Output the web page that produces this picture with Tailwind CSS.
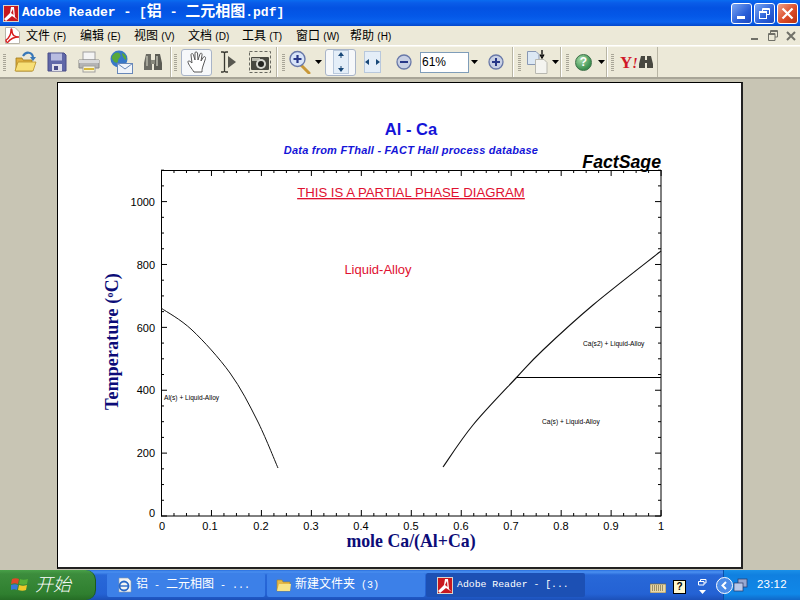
<!DOCTYPE html>
<html lang="zh-CN">
  <head>
    <meta charset="UTF-8" />
    <title>Adobe Reader - [铝 - 二元相图.pdf]</title>
    <script src="https://cdn.jsdelivr.net/npm/@tailwindcss/browser@4"></script>
  </head>
  <body class="w-[800px] h-[600px] overflow-hidden bg-[#ece9d8] font-['Liberation_Sans','Noto_Sans_CJK_SC',sans-serif]">
    <div class="flex flex-col h-[600px]">
      <!-- title bar -->
      <div class="h-[26px] shrink-0 flex items-center pl-[3px] pr-[2px] bg-[linear-gradient(180deg,#0a6cf0_0px,#0a5ce8_3px,#0352e2_8px,#0458e8_16px,#0a62ee_22px,#0348cc_26px)]">
        <svg class="w-[16px] h-[17px]" viewBox="0 0 16 17">
          <rect width="16" height="17" fill="#d8d4cc"/>
          <rect x="1" y="1" width="14" height="15" fill="#c8181e"/>
          <path d="M1 14 L7 8 L8 2 L11 2 L12 12 L15 15 L9 11 L3 16 Z" fill="#fff"/>
          <path d="M8 8 L10 4 L10.5 10 Z" fill="#c8181e"/>
        </svg>
        <div class="ml-[3px] text-white font-bold text-[13px] whitespace-pre font-['Liberation_Mono','Noto_Sans_CJK_SC',monospace]">Adobe Reader - [<span class="text-[15px]">铝</span> - <span class="text-[15px]">二元相图</span>.pdf]</div>
        <div class="ml-auto flex gap-[2px]">
          <div class="w-[21px] h-[21px] rounded-[3px] border border-white bg-[linear-gradient(135deg,#7ba6f2,#2a5fd8_60%,#1c48c0)] flex items-end pl-[5px] pb-[4px]">
            <div class="w-[8px] h-[3px] bg-white"></div>
          </div>
          <div class="w-[21px] h-[21px] rounded-[3px] border border-white bg-[linear-gradient(135deg,#7ba6f2,#2a5fd8_60%,#1c48c0)] relative">
            <svg class="w-[19px] h-[19px]" viewBox="0 0 19 19" fill="none" stroke="#fff"><path d="M7.5 7V4.5H14.5V10.5H12"/><rect x="4.5" y="7.5" width="7" height="7"/><path d="M7.5 5.5H14.5M4.5 8.5H11.5"/></svg>
          </div>
          <div class="w-[21px] h-[21px] rounded-[3px] border border-white bg-[linear-gradient(135deg,#f0a088,#dc4c28_55%,#b83010)]">
            <svg class="w-[19px] h-[19px]" viewBox="0 0 19 19" fill="none" stroke="#fff" stroke-width="2.2"><path d="M4.5 4.5L14.5 14.5M14.5 4.5L4.5 14.5"/></svg>
          </div>
        </div>
      </div>

      <!-- menu bar -->
      <div class="h-[20px] shrink-0 flex items-center text-[12px] text-black border-b border-white relative">
        <svg class="ml-[5px] w-[15px] h-[17px]" viewBox="0 0 15 17">
          <path d="M.5.5H10L14.5 5V16.5H.5Z" fill="#fff" stroke="#b8b4a8"/>
          <path d="M1 13C4 11 6 7 6 3C6 1 7 2 7 4C7 8 10 10 14 10C10 10 6 11 3 15C2 16 1 15 1 13Z" fill="none" stroke="#d81e1e" stroke-width="1.4"/>
        </svg>
        <div class="ml-[6px] w-[54px] whitespace-pre">文件 <span class="text-[10px]">(F)</span></div>
        <div class="w-[54px] whitespace-pre">编辑 <span class="text-[10px]">(E)</span></div>
        <div class="w-[54px] whitespace-pre">视图 <span class="text-[10px]">(V)</span></div>
        <div class="w-[54px] whitespace-pre">文档 <span class="text-[10px]">(D)</span></div>
        <div class="w-[54px] whitespace-pre">工具 <span class="text-[10px]">(T)</span></div>
        <div class="w-[54px] whitespace-pre">窗口 <span class="text-[10px]">(W)</span></div>
        <div class="w-[54px] whitespace-pre">帮助 <span class="text-[10px]">(H)</span></div>
        <div class="ml-auto flex pr-[1px]">
          <svg class="w-[16px] h-[16px] mr-[2px]" viewBox="0 0 16 16"><rect x="4" y="10" width="7" height="2" fill="#707068"/></svg>
          <svg class="w-[16px] h-[16px] mr-[2px]" viewBox="0 0 16 16" fill="none" stroke="#707068"><path d="M5.5 5V2.5H12.5V9H10M3.5 5.5H10V12.5H3.5ZM3.5 6.5H10M5.5 3.5H12.5"/></svg>
          <svg class="w-[16px] h-[16px]" viewBox="0 0 16 16" fill="none" stroke="#707068" stroke-width="2"><path d="M4 4L12 12M12 4L4 12"/></svg>
        </div>
      </div>

      <!-- toolbar -->
      <div class="h-[33px] shrink-0 flex border-b-[2px] border-[#a8a597] border-t border-t-[#f8f6ec]">
        <div class="w-[171px] shrink-0 flex items-center relative border-r border-r-[#b8b5a4] pl-[9px]">
          <div class="absolute left-[3px] top-[7px] w-[3px] h-[17px] bg-[repeating-linear-gradient(180deg,#a8a597_0,#a8a597_1px,transparent_1px,transparent_2px)]"></div>
          <div class="w-[32px] flex justify-center">
            <svg class="w-[24px] h-[24px]" viewBox="0 0 24 24">
              <path d="M3 8H9L10 10H19V21H3Z" fill="#e0b040" stroke="#a07818" stroke-width=".8"/>
              <path d="M2 21L5 12H23L20 21Z" fill="#f8e078" stroke="#b89028" stroke-width=".8"/>
              <path d="M10 6C13 1 19 2 20 7" fill="none" stroke="#3878b8" stroke-width="2.2"/>
              <path d="M17 7H23L20 11Z" fill="#3878b8"/>
            </svg>
          </div>
          <div class="w-[32px] flex justify-center">
            <svg class="w-[20px] h-[20px]" viewBox="0 0 20 20">
              <path d="M1 1H17L19 3V19H1Z" fill="#6068a8" stroke="#484c88"/>
              <rect x="4" y="1.5" width="11" height="7" fill="#b8bce0"/>
              <rect x="5" y="12" width="10" height="7" fill="#e0e0ec"/>
              <rect x="7" y="14" width="4" height="4" fill="#484c88"/>
            </svg>
          </div>
          <div class="w-[32px] flex justify-center">
            <svg class="w-[22px] h-[22px]" viewBox="0 0 22 22">
              <rect x="5" y="1" width="12" height="8" fill="#f4f4f4" stroke="#a0a0a0"/>
              <path d="M1 9H21V17H1Z" fill="#b4b4b4" stroke="#888"/>
              <rect x="1" y="9" width="20" height="3" fill="#d8d8d8"/>
              <rect x="5" y="15" width="12" height="6" fill="#f8f4d8" stroke="#a0a0a0"/>
              <rect x="6" y="17" width="10" height="2" fill="#d8b838"/>
            </svg>
          </div>
          <div class="w-[32px] flex justify-center">
            <svg class="w-[24px] h-[24px]" viewBox="0 0 24 24">
              <circle cx="10" cy="9" r="8.5" fill="#3878c8"/>
              <path d="M4 5C7 2 9 2 11 4C13 7 9 8 9 11C9 14 5 13 4 10C2 8 3 6 4 5Z" fill="#58a838"/>
              <path d="M13 3C16 4 18 7 17 10C15 9 13 6 13 3Z" fill="#58a838"/>
              <rect x="8.5" y="13.5" width="15" height="10" fill="#f0f4fa" stroke="#6888b8"/>
              <path d="M8.5 13.5L16 19L23.5 13.5" fill="none" stroke="#6888b8"/>
            </svg>
          </div>
          <div class="w-[32px] flex justify-center">
            <svg class="w-[20px] h-[20px]" viewBox="0 0 20 20">
              <path d="M3 2H8V7L9 12V18H1V11Z" fill="#6c6c64"/>
              <path d="M12 2H17L19 11V18H11V12L12 7Z" fill="#5c5c54"/>
              <rect x="8" y="8" width="4" height="4" fill="#88887c"/>
              <rect x="3" y="4" width="2" height="10" fill="#a4a498"/>
              <rect x="13" y="4" width="2" height="10" fill="#a4a498"/>
            </svg>
          </div>
        </div>

        <div class="w-[106px] shrink-0 flex items-center relative border-l border-l-white border-r border-r-[#b8b5a4] pl-[9px]">
          <div class="absolute left-[2px] top-[7px] w-[3px] h-[17px] bg-[repeating-linear-gradient(180deg,#a8a597_0,#a8a597_1px,transparent_1px,transparent_2px)]"></div>
          <div class="w-[31px] h-[27px] rounded-[3px] border border-[#a8b4c8] bg-[#f6f8fa] flex items-center justify-center">
            <svg class="w-[22px] h-[23px]" viewBox="0 0 22 23">
              <path d="M8 21C6 18 2 13 2 11C2 9 4 10 6 12L5 4C5 2 7 2 7.5 4L9 9L9 2C9 0.5 11 0.5 11.5 2L12 9L14 3C14.5 1.5 16.5 2 16 4L15 10L17.5 6C18.5 5 20 6 19.5 7.5L17 15C16 18 16 19 16 21Z" fill="#fff" stroke="#585858"/>
            </svg>
          </div>
          <div class="w-[32px] flex justify-center">
            <svg class="w-[18px] h-[22px]" viewBox="0 0 18 22">
              <path d="M2 1H4C5 1 5.5 2 5.5 2C5.5 2 6 1 7 1H9M5.5 2V20M2 21H4C5 21 5.5 20 5.5 20C5.5 20 6 21 7 21H9" fill="none" stroke="#383830" stroke-width="1.3"/>
              <path d="M9 5L17 11L9 17Z" fill="#585850"/>
            </svg>
          </div>
          <div class="w-[32px] flex justify-center">
            <svg class="w-[22px] h-[22px]" viewBox="0 0 22 22">
              <rect x=".5" y=".5" width="21" height="21" fill="none" stroke="#686860" stroke-dasharray="3 2"/>
              <rect x="2" y="6" width="18" height="13" rx="1" fill="#484840"/>
              <rect x="3" y="7" width="8" height="3" fill="#b8b8ac"/>
              <circle cx="12" cy="13" r="5" fill="#d8d8d0"/>
              <circle cx="12" cy="13" r="3" fill="#242420"/>
            </svg>
          </div>
        </div>

        <div class="w-[236px] shrink-0 flex items-center relative border-l border-l-white border-r border-r-[#b8b5a4] pl-[9px]">
          <div class="absolute left-[4px] top-[7px] w-[3px] h-[17px] bg-[repeating-linear-gradient(180deg,#a8a597_0,#a8a597_1px,transparent_1px,transparent_2px)]"></div>
          <svg class="ml-[2px] w-[22px] h-[24px]" viewBox="0 0 22 24">
            <path d="M12 15L20 23" stroke="#c89838" stroke-width="3" stroke-linecap="round"/>
            <circle cx="8.5" cy="9" r="7.5" fill="#d8e4f8" stroke="#6878a8" stroke-width="1.4"/>
            <path d="M8.5 5V13M4.5 9H12.5" stroke="#283888" stroke-width="2.2"/>
          </svg>
          <svg class="ml-[4px] w-[7px] h-[4px]" viewBox="0 0 7 4"><path d="M0 0H7L3.5 4Z" fill="#000"/></svg>
          <div class="ml-[3px] w-[31px] h-[27px] rounded-[3px] border border-[#a8b4c8] bg-[#f6f8fa] flex items-center justify-center">
            <svg class="w-[16px] h-[24px]" viewBox="0 0 16 24">
              <rect x=".5" y=".5" width="15" height="23" fill="#e4eef8" stroke="#b8c8dc"/>
              <path d="M8 2L5 6H11ZM8 22L5 18H11Z" fill="#184878"/><path d="M8 5V8M8 16V19" stroke="#184878"/>
            </svg>
          </div>
          <svg class="ml-[8px] w-[17px] h-[22px]" viewBox="0 0 17 22">
            <rect x=".5" y=".5" width="16" height="21" fill="#e4eef8" stroke="#b8c8dc"/>
            <path d="M1 11L5 8V14ZM16 11L12 8V14Z" fill="#184878"/>
          </svg>
          <svg class="ml-[15px] w-[16px] h-[16px]" viewBox="0 0 16 16">
            <circle cx="8" cy="8" r="7" fill="#c8d0e4" stroke="#6878a8" stroke-width="1.3"/>
            <path d="M4 8H12" stroke="#283888" stroke-width="2"/>
          </svg>
          <div class="ml-[8px] w-[49px] h-[21px] bg-white border border-[#7f9db9] pl-[1px] text-[12px] leading-[19px] text-black">61%</div>
          <svg class="ml-[2px] w-[7px] h-[4px]" viewBox="0 0 7 4"><path d="M0 0H7L3.5 4Z" fill="#000"/></svg>
          <svg class="ml-[10px] w-[16px] h-[16px]" viewBox="0 0 16 16">
            <circle cx="8" cy="8" r="7" fill="#c8d0e4" stroke="#6878a8" stroke-width="1.3"/>
            <path d="M4 8H12M8 4V12" stroke="#283888" stroke-width="2"/>
          </svg>
        </div>

        <div class="w-[48px] shrink-0 flex items-center relative border-l border-l-white border-r border-r-[#b8b5a4] pl-[13px]">
          <div class="absolute left-[4px] top-[7px] w-[3px] h-[17px] bg-[repeating-linear-gradient(180deg,#a8a597_0,#a8a597_1px,transparent_1px,transparent_2px)]"></div>
          <svg class="w-[24px] h-[24px]" viewBox="0 0 24 24">
            <path d="M.5 1.5H9L12 4.5V14.5H.5Z" fill="#dce8f4" stroke="#8898b4"/>
            <path d="M8.5 9.5H17L20 12.5V23.5H8.5Z" fill="#f4f4f0" stroke="#b8b8b0"/>
            <path d="M15 0V6M13 4.5L15 8L17 4.5" fill="none" stroke="#000" stroke-width="1.3"/>
          </svg>
          <svg class="ml-[1px] w-[7px] h-[4px]" viewBox="0 0 7 4"><path d="M0 0H7L3.5 4Z" fill="#000"/></svg>
        </div>

        <div class="w-[46px] shrink-0 flex items-center relative border-l border-l-white border-r border-r-[#b8b5a4] pl-[13px]">
          <div class="absolute left-[4px] top-[7px] w-[3px] h-[17px] bg-[repeating-linear-gradient(180deg,#a8a597_0,#a8a597_1px,transparent_1px,transparent_2px)]"></div>
          <div class="w-[17px] h-[17px] rounded-full bg-[radial-gradient(circle_at_35%_30%,#a8dca8,#3c9050_70%)] border border-[#3c7048] text-white font-bold text-[12px] leading-[15px] text-center">?</div>
          <svg class="ml-[6px] w-[7px] h-[4px]" viewBox="0 0 7 4"><path d="M0 0H7L3.5 4Z" fill="#000"/></svg>
        </div>

        <div class="w-[51px] shrink-0 flex items-center relative border-l border-l-white border-r border-r-[#b8b5a4] pl-[12px]">
          <div class="absolute left-[3px] top-[7px] w-[3px] h-[17px] bg-[repeating-linear-gradient(180deg,#a8a597_0,#a8a597_1px,transparent_1px,transparent_2px)]"></div>
          <div class="font-['Liberation_Serif',serif] font-black text-[#d01828] text-[17px] leading-none">Y<span class="italic text-[14px]">!</span></div>
          <svg class="ml-[1px] w-[14px] h-[12px]" viewBox="0 0 14 12">
            <path d="M2 0H6V4H8V0H12L14 8V12H8V7H6V12H0V8Z" fill="#484840"/>
          </svg>
        </div>
      </div>

      <!-- document area -->
      <div class="flex-1 min-h-0 bg-[#c8c5b4] pl-[57px] pt-[3px] relative">
        <div class="w-[686px] h-[487px] bg-white border-l border-t border-black border-r-[2px] border-b-[2px] border-r-[#222] border-b-[#222]">
          <svg class="block w-[683px] h-[484px]" viewBox="58 83 683 484" fill="none">
            <text x="411" y="135" text-anchor="middle" class="fill-[#1414d8] font-bold text-[16.5px] font-['Liberation_Sans']">Al - Ca</text>
            <text x="411" y="154" text-anchor="middle" class="fill-[#1414d8] font-bold italic text-[11px] tracking-[0.22px] font-['Liberation_Sans']">Data from FThall - FACT Hall process database</text>
            <text x="661" y="168" text-anchor="end" class="fill-black font-bold italic text-[17.7px] font-['Liberation_Sans']">FactSage</text>

            <rect x="161.5" y="170.5" width="499.5" height="345.5" stroke="#000"/>
            <path id="ticks" stroke="#000"/>

            <path id="curve-left" stroke="#111"/>
            <path id="curve-right" stroke="#111" stroke-width="1.1"/>
            <path d="M517 377.5H661" stroke="#000"/>

            <text x="411" y="197" text-anchor="middle" class="fill-[#e01030] text-[13.2px] underline font-['Liberation_Sans']">THIS IS A PARTIAL PHASE DIAGRAM</text>
            <text x="378" y="274" text-anchor="middle" class="fill-[#e01030] text-[13px] font-['Liberation_Sans']">Liquid-Alloy</text>
            <text x="164" y="400" class="fill-black text-[6.6px] font-['Liberation_Sans']">Al(s) + Liquid-Alloy</text>
            <text x="583" y="346" class="fill-black text-[6.6px] font-['Liberation_Sans']">Ca(s2) + Liquid-Alloy</text>
            <text x="542" y="424" class="fill-black text-[6.6px] font-['Liberation_Sans']">Ca(s) + Liquid-Alloy</text>

            <g class="fill-black text-[11px] font-['Liberation_Sans']" text-anchor="end">
              <text x="155" y="206">1000</text>
              <text x="155" y="269">800</text>
              <text x="155" y="332">600</text>
              <text x="155" y="394">400</text>
              <text x="155" y="457">200</text>
              <text x="155" y="517">0</text>
            </g>
            <g class="fill-black text-[11px] font-['Liberation_Sans']" text-anchor="middle">
              <text x="162" y="529.5">0</text>
              <text x="210" y="529.5">0.1</text>
              <text x="261" y="529.5">0.2</text>
              <text x="311" y="529.5">0.3</text>
              <text x="361" y="529.5">0.4</text>
              <text x="411" y="529.5">0.5</text>
              <text x="461" y="529.5">0.6</text>
              <text x="511" y="529.5">0.7</text>
              <text x="561" y="529.5">0.8</text>
              <text x="611" y="529.5">0.9</text>
              <text x="661" y="529.5">1</text>
            </g>
            <text x="411" y="547" text-anchor="middle" class="fill-[#0c0c78] font-bold text-[17.8px] font-['Liberation_Serif']">mole Ca/(Al+Ca)</text>
            <text transform="translate(118 341.5) rotate(-90)" text-anchor="middle" class="fill-[#0c0c78] font-bold text-[17.8px] tracking-[0.25px] font-['Liberation_Serif']">Temperature (<tspan dy="-5" class="text-[10px]">o</tspan><tspan dy="5">C)</tspan></text>
          </svg>
        </div>
      </div>

      <!-- taskbar -->
      <div class="h-[30px] shrink-0 flex items-center bg-[linear-gradient(180deg,#2a70e0_0,#4a90f0_2px,#2868d8_5px,#2462d4_24px,#1c50b8_30px)] text-white text-[11px]">
        <div class="w-[96px] h-[30px] shrink-0 rounded-r-[10px] bg-[linear-gradient(180deg,#48a048_0,#3c8c3c_4px,#2f7f2f_24px,#256c25_30px)] flex items-center pl-[11px] border-r border-r-[#1c5a1c]">
          <svg class="w-[18px] h-[18px]" viewBox="0 0 18 18">
            <path d="M1 3C3 2 6 2 8 3L7 8C5 7 3 7 0 8Z" fill="#e04828"/>
            <path d="M9 3C11 4 14 4 17 3L16 8C14 9 11 9 8 8Z" fill="#58b038"/>
            <path d="M0 9C3 8 5 8 7 9L6 14C4 13 2 13 0 14Z" fill="#3878d8"/>
            <path d="M8 9C11 10 13 10 16 9L15 14C13 15 10 15 7 14Z" fill="#f0c828"/>
          </svg>
          <span class="ml-[6px] text-[18px] italic font-light leading-none">开始</span>
        </div>
        <div class="ml-[11px] w-[158px] h-[24px] shrink-0 rounded-[2px] bg-[#3c80e8] flex items-center pl-[9px]">
          <svg class="w-[16px] h-[16px] shrink-0" viewBox="0 0 16 16">
            <path d="M3 1H12L15 4V15H3Z" fill="#f4f4f4" stroke="#8898a8" stroke-width=".6"/>
            <circle cx="8" cy="9" r="4.5" fill="none" stroke="#2868c8" stroke-width="1.8"/>
            <path d="M4 9H12" stroke="#2868c8" stroke-width="1.4"/>
          </svg>
          <span class="ml-[4px] whitespace-pre text-[10px] font-['Liberation_Mono','Noto_Sans_CJK_SC',monospace]"><span class="text-[12px]">铝</span> - <span class="text-[12px]">二元相图</span> - ...</span>
        </div>
        <div class="ml-[2px] w-[158px] h-[24px] shrink-0 rounded-[2px] bg-[#3c80e8] flex items-center pl-[9px]">
          <svg class="w-[16px] h-[16px] shrink-0" viewBox="0 0 16 16">
            <path d="M1 3H6L7 5H14V14H1Z" fill="#e4b848" stroke="#a88020" stroke-width=".6"/>
            <path d="M1 14L3 7H15L14 14Z" fill="#f8e488"/>
          </svg>
          <span class="ml-[3px] whitespace-pre text-[10px] font-['Liberation_Mono','Noto_Sans_CJK_SC',monospace]"><span class="text-[12px]">新建文件夹</span> (3)</span>
        </div>
        <div class="ml-[1px] w-[159px] h-[24px] shrink-0 rounded-[2px] bg-[#1c50b4] flex items-center pl-[11px]">
          <svg class="w-[16px] h-[17px] shrink-0" viewBox="0 0 16 17">
            <rect width="16" height="17" fill="#d8d4cc"/>
            <rect x="1" y="1" width="14" height="15" fill="#c8181e"/>
            <path d="M1 14L7 8L8 2L11 2L12 12L15 15L9 11L3 16Z" fill="#fff"/>
            <path d="M8 8L10 4L10.5 10Z" fill="#c8181e"/>
          </svg>
          <span class="ml-[4px] whitespace-pre text-[9.8px] font-['Liberation_Mono']">Adobe Reader - [...</span>
        </div>
        <div class="ml-auto w-[77px] h-[30px] shrink-0 relative">
          <div class="absolute right-[93px] top-[9px] flex items-center gap-[7px]">
            <svg class="w-[16px] h-[12px]" viewBox="0 0 16 12">
              <rect y="3" width="16" height="9" fill="#e8d8a8" stroke="#786838" stroke-width=".7"/>
              <path d="M2 5H14M2 7H14M2 9H14" stroke="#504828" stroke-dasharray="1 1"/>
            </svg>
            <div class="w-[13px] h-[14px] bg-[#fff8d0] border border-black text-black font-bold text-[10px] leading-[12px] text-center">?</div>
            <svg class="ml-[5px] w-[9px] h-[16px]" viewBox="0 0 9 16" fill="none" stroke="#fff">
              <path d="M2.5 2.5V.5H8V4H6M.5 2.5H6V6H.5Z"/><path d="M1 11H8L4.5 15Z" fill="#fff" stroke="none"/>
            </svg>
          </div>
          <div class="w-[77px] h-[30px] bg-[linear-gradient(180deg,#1a90e8,#1080e0_5px,#1088e8_24px,#1068c8)] flex items-center border-l border-l-[#0a50a8]">
            <div class="-ml-[8px] w-[17px] h-[17px] rounded-full bg-[#4c8ce8] border border-white flex items-center justify-center">
              <svg class="w-[9px] h-[9px]" viewBox="0 0 9 9" fill="none" stroke="#fff" stroke-width="2"><path d="M6 1L2.5 4.5L6 8"/></svg>
            </div>
            <svg class="w-[15px] h-[15px]" viewBox="0 0 15 15">
              <rect x="5" y="1" width="9" height="8" fill="#98a8d0" stroke="#283868" stroke-width=".7"/>
              <rect x="1" y="5" width="9" height="8" fill="#b8c8e8" stroke="#283868" stroke-width=".7"/>
            </svg>
            <span class="ml-[9px] text-[11.5px] tracking-[0.2px] font-['Liberation_Sans']">23:12</span>
          </div>
        </div>
      </div>
    </div>
    <script>
      // axis ticks: minor every 12.5px / 15.72px, major every 4th
      let d = "";
      for (let i = 0; i <= 40; i++) {
        const x = 161.5 + i * 12.49;
        const len = i % 4 == 0 ? 6 : 3;
        d += `M${x} 170V${170 + len}M${x} 516V${516 - len}`;
      }
      for (let i = 0; i <= 22; i++) {
        const y = 516 - i * 15.72;
        const len = i % 4 == 0 ? 6 : 3;
        d += `M161 ${y}H${161 + len}M661 ${y}H${661 - len}`;
      }
      document.getElementById("ticks").setAttribute("d", d);

      // liquidus curves, read off the picture, smoothed as a spline
      function spline(p) {
        let s = `M${p[0][0]} ${p[0][1]}`;
        for (let i = 0; i < p.length - 1; i++) {
          const a = p[Math.max(i - 1, 0)], b = p[i], c = p[i + 1], e = p[Math.min(i + 2, p.length - 1)];
          s += `C${b[0] + (c[0] - a[0]) / 6} ${b[1] + (c[1] - a[1]) / 6} ${c[0] - (e[0] - b[0]) / 6} ${c[1] - (e[1] - b[1]) / 6} ${c[0]} ${c[1]}`;
        }
        return s;
      }
      document.getElementById("curve-left").setAttribute("d", spline([[161, 308], [192, 330], [230, 373], [257, 420], [278, 468]]));
      document.getElementById("curve-right").setAttribute("d", spline([[443, 467], [473, 425], [517, 377], [543, 350], [593, 305], [661, 251]]));
    </script>
  </body>
</html>
